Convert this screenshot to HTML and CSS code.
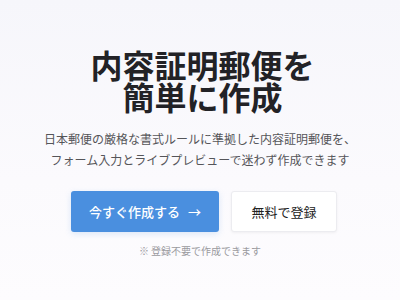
FILE: index.html
```html
<!DOCTYPE html>
<html lang="ja">
<head>
<meta charset="utf-8">
<link rel="stylesheet" href="styles.css">
</head>
<body>
<main class="hero">
  <h1 class="title">内容証明郵便を<br>簡単に作成</h1>
  <p class="lead">日本郵便の厳格な書式ルールに準拠した内容証明郵便を、<br>フォーム入力とライブプレビューで迷わず作成できます</p>
  <div class="actions">
    <a class="btn btn-primary">今すぐ作成する <span class="arrow">→</span></a>
    <a class="btn btn-secondary">無料で登録</a>
  </div>
  <p class="note">※ 登録不要で作成できます</p>
</main>
</body>
</html>
```
FILE: styles.css
```css
html, body {
  margin: 0;
  padding: 0;
}
body {
  width: 400px;
  height: 300px;
  overflow: hidden;
  background: linear-gradient(180deg, #f6f6fb 0%, #fbfafd 60%, #fdfcfe 100%);
  font-family: "Noto Sans CJK JP", "Noto Sans", sans-serif;
}
.hero {
  display: flex;
  flex-direction: column;
  align-items: center;
  padding-top: 48px;
}
.title {
  margin: 0;
  font-size: 32px;
  line-height: 32px;
  font-weight: 600;
  color: #222226;
  text-align: center;
  letter-spacing: 0;
  padding-left: 5px;
}
.lead {
  margin: 16px 0 0;
  font-size: 12px;
  line-height: 21px;
  color: #555559;
  text-align: center;
}
.actions {
  display: flex;
  gap: 12px;
  margin-top: 21px;
  margin-left: 8px;
}
.btn {
  display: flex;
  align-items: center;
  justify-content: center;
  height: 41px;
  box-sizing: border-box;
  border-radius: 3px;
  font-size: 13px;
  text-decoration: none;
}
.btn-primary {
  width: 148px;
  background: #4a8fdf;
  color: #fff;
  font-weight: 500;
  box-shadow: 0 2px 6px rgba(74, 143, 223, 0.18);
}
.arrow {
  margin-left: 8px;
  font-size: 13px;
}
.btn-secondary {
  width: 106px;
  background: #fff;
  color: #222;
  border: 1px solid #ececf0;
  box-shadow: 0 1px 3px rgba(0, 0, 0, 0.05);
}
.note {
  margin: 12px 0 0;
  font-size: 10px;
  line-height: 14px;
  color: #9a9a9e;
}
```
